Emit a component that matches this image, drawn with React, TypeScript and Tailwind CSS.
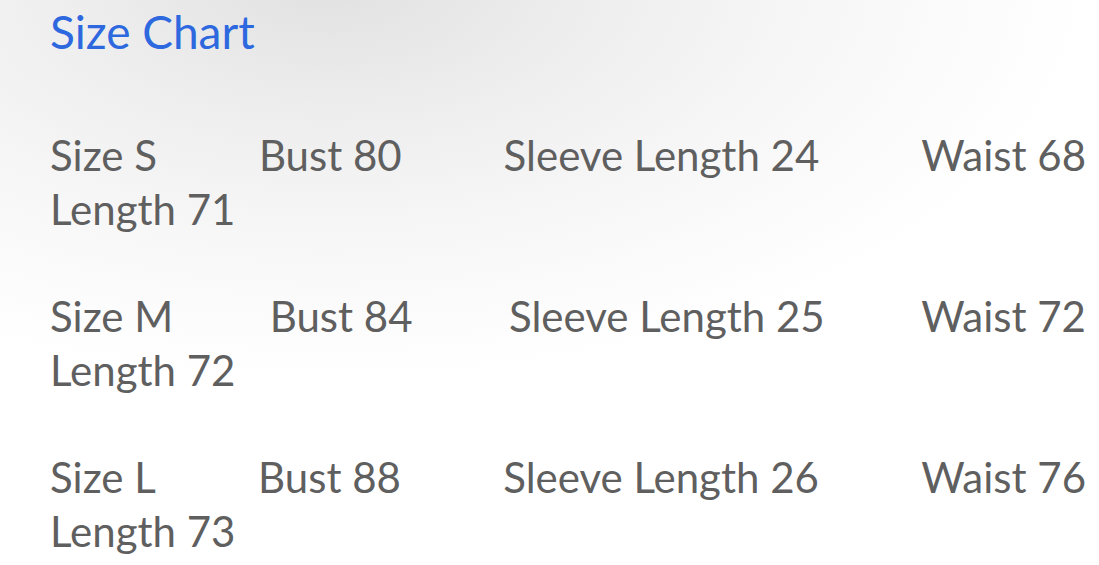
import React from "react";

const rows = [
  { size: "Size S", bust: "Bust 80", sleeve: "Sleeve Length 24", waist: "Waist 68", length: "Length 71" },
  { size: "Size M", bust: "Bust 84", sleeve: "Sleeve Length 25", waist: "Waist 72", length: "Length 72" },
  { size: "Size L", bust: "Bust 88", sleeve: "Sleeve Length 26", waist: "Waist 76", length: "Length 73" },
];

export default function App() {
  return (
    <div
      className="w-[1099px] h-[565px] overflow-hidden bg-white bg-[radial-gradient(ellipse_760px_400px_at_330px_-20px,#e1e1e1_0%,#eeeeee_35%,#f7f7f7_65%,#ffffff_100%)] pl-[50px] pr-[13px] pt-[4px]"
      style={{ fontFamily: "Lato, 'Noto Sans', sans-serif" }}
    >
      <h1 className="text-[46px] leading-[55px] text-[#2d68df] font-normal">Size Chart</h1>
      <div className="mt-[69px] flex flex-col gap-[53px] text-[42px] leading-[54px] text-[#5f5f5f]">
        {rows.map((r) => (
          <div key={r.size}>
            <div className="flex justify-between">
              <span>{r.size}</span>
              <span>{r.bust}</span>
              <span>{r.sleeve}</span>
              <span>{r.waist}</span>
            </div>
            <div>{r.length}</div>
          </div>
        ))}
      </div>
    </div>
  );
}
